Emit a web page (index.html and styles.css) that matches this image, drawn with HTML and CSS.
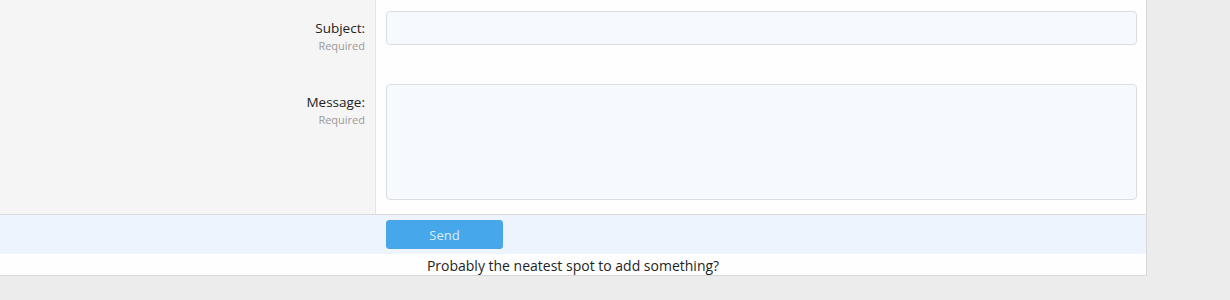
FILE: index.html
```html
<!DOCTYPE html>
<html lang="en">
<head>
<meta charset="utf-8">
<title>Contact</title>
<link rel="stylesheet" href="styles.css">
</head>
<body>
<form class="block">
  <div class="row row-subject">
    <div class="label-cell">
      <label class="label" for="subject">Subject:</label>
      <div class="hint">Required</div>
    </div>
    <div class="input-cell">
      <input id="subject" class="input input-text" type="text">
    </div>
  </div>
  <div class="row row-message">
    <div class="label-cell">
      <label class="label" for="message">Message:</label>
      <div class="hint">Required</div>
    </div>
    <div class="input-cell">
      <textarea id="message" class="input input-area"></textarea>
    </div>
  </div>
  <div class="footer">
    <div class="footer-spacer"></div>
    <div class="footer-actions">
      <button type="button" class="button">Send</button>
    </div>
  </div>
  <div class="note">Probably the neatest spot to add something?</div>
</form>
</body>
</html>
```
FILE: styles.css
```css
html, body {
  margin: 0;
  padding: 0;
  background: #ececec;
  font-family: "Open Sans", "Noto Sans", sans-serif;
  font-size: 13px;
  color: #303030;
}

.block {
  width: 1147px;
  background: #fefefe;
  border-right: 1px solid #d8d8d8;
  border-bottom: 1px solid #d8d8d8;
  box-sizing: border-box;
}

.row {
  display: grid;
  grid-template-columns: 376px 1fr;
}

.label-cell {
  background: #f5f5f5;
  border-right: 1px solid #e4e4e4;
  text-align: right;
  padding-right: 10px;
}

.label {
  display: block;
  font-size: 13.5px;
  line-height: 20px;
  color: #222;
}

.hint {
  font-size: 11px;
  line-height: 16px;
  color: #9a9a9a;
}

.input-cell {
  padding-left: 10px;
  padding-right: 9px;
}

.row-subject .label-cell { padding-top: 18px; }
.row-subject .input-cell { padding-top: 11px; padding-bottom: 19px; }

.row-message .label-cell { padding-top: 28px; }
.row-message .input-cell { padding-top: 20px; padding-bottom: 14px; }

.input {
  display: block;
  width: 100%;
  box-sizing: border-box;
  background: #f6fafe;
  border: 1px solid #dadee2;
  border-radius: 4px;
  font: inherit;
  margin: 0;
  outline: none;
}

.input-text { height: 34px; }
.input-area { height: 116px; resize: none; }

.footer {
  display: grid;
  grid-template-columns: 376px 1fr;
  background: #edf4fd;
  border-top: 1px solid #dcdcdc;
  padding: 5px 0 5px;
}

.footer-actions { padding-left: 10px; }

.button {
  display: block;
  width: 117px;
  height: 29px;
  background: #47a7eb;
  border: 1px solid #4aa5e6;
  border-radius: 3px;
  color: #dcedfa;
  font: inherit;
  font-size: 13px;
  padding: 0;
}

.note {
  text-align: center;
  font-size: 14px;
  line-height: 21px;
  padding-top: 1px;
  height: 21px;
  box-sizing: border-box;
  color: #1f1f1f;
}
```
